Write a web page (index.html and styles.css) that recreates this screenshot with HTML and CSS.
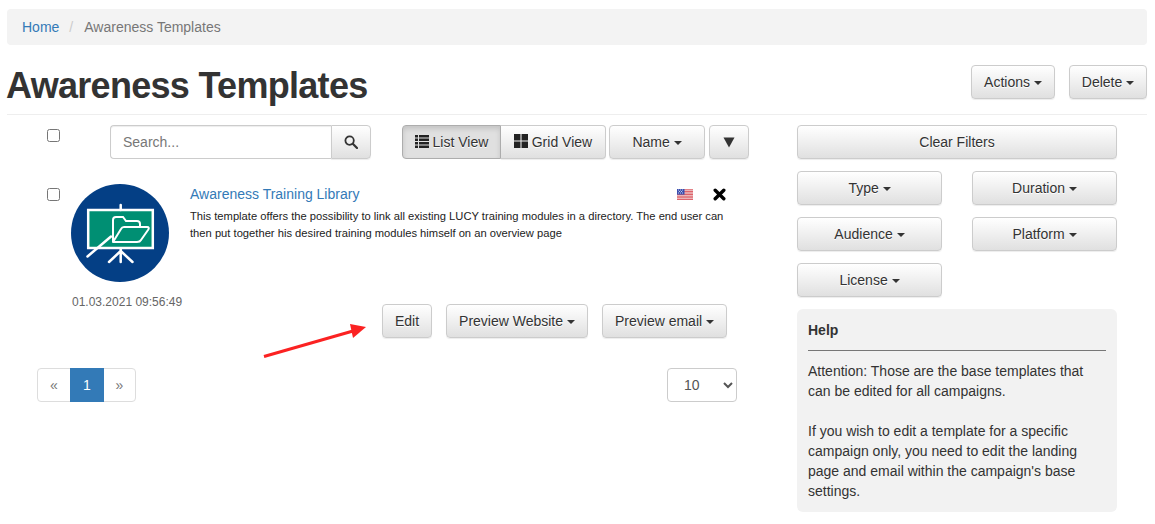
FILE: index.html
```html
<!DOCTYPE html>
<html lang="en">
<head>
<meta charset="utf-8">
<title>Awareness Templates</title>
<link rel="stylesheet" href="styles.css">
</head>
<body>
<div class="page">
  <nav class="breadcrumb"><a href="#">Home</a><span class="sep">/</span><span class="current">Awareness Templates</span></nav>
  <header class="page-header">
    <h1>Awareness Templates</h1>
    <div class="header-actions">
      <button class="btn btn-actions">Actions <i class="caret"></i></button>
      <button class="btn btn-delete">Delete <i class="caret"></i></button>
    </div>
  </header>
  <div class="content">
    <main class="main">
      <div class="toolbar">
        <input type="checkbox" class="check select-all">
        <div class="search">
          <input type="text" class="search-input" placeholder="Search...">
          <button class="btn search-btn" aria-label="Search">
            <svg width="14" height="14" viewBox="0 0 14 14"><circle cx="5.6" cy="5.6" r="4.2" fill="none" stroke="#333" stroke-width="1.8"/><path d="M8.8 8.8 L13 13" stroke="#333" stroke-width="2.2" stroke-linecap="round"/></svg>
          </button>
        </div>
        <div class="view-group">
          <button class="btn view-list">
            <svg width="14" height="13" viewBox="0 0 14 13" fill="#222"><path d="M0 0h3v2.4H0zM4 0h10v2.4H4zM0 3.5h3v2.4H0zM4 3.5h10v2.4H4zM0 7h3v2.4H0zM4 7h10v2.4H4zM0 10.500h3v2.400H0zM4 10.500h10v2.400H4z"/></svg>
            List View</button>
          <button class="btn view-grid">
            <svg width="14" height="14" viewBox="0 0 13 13" fill="#222"><path d="M0 0h6v6H0zM7 0h6v6H7zM0 7h6v6H0zM7 7h6v6H7z"/></svg>
            Grid View</button>
        </div>
        <button class="btn sort-name">Name <i class="caret"></i></button>
        <button class="btn sort-dir" aria-label="Sort direction"><svg width="12" height="11" viewBox="0 0 12 11"><path d="M0.500 0.500H11.500L6 10.500Z" fill="#333"/></svg></button>
      </div>

      <article class="item">
        <input type="checkbox" class="check item-check">
        <div class="item-side">
          <svg class="logo" width="98" height="98" viewBox="0 0 98 98">
            <circle cx="49" cy="49" r="49" fill="#043f85"/>
            <rect x="17.200" y="26" width="64.600" height="38" fill="#008f73" stroke="#fff" stroke-width="2.500"/>
            <path d="M49.700 21V26M49.700 65V78M49.700 67L38 78M49.700 67L61.500 78" stroke="#fff" stroke-width="2.500" stroke-linecap="round" fill="none"/>
            <path d="M16.500 72.500L40 52.500" stroke="#fff" stroke-width="2.500" stroke-linecap="round"/>
            <path d="M42 58V36Q42 33 45 33H52L55 37H66Q69 37 69 40V43" fill="none" stroke="#fff" stroke-width="2"/>
            <path d="M42 58L50 45Q51 43 53 43H76Q79 43 77 46L70 56Q69 58 66 58Z" fill="none" stroke="#fff" stroke-width="2" stroke-linejoin="round"/>
          </svg>
          <div class="date">01.03.2021 09:56:49</div>
        </div>
        <div class="item-body">
          <div class="item-top">
            <a href="#" class="item-title">Awareness Training Library</a>
            <svg class="flag" width="16" height="11" viewBox="0 0 16 11">
              <rect width="16" height="11" fill="#f4f4f4"/>
              <path d="M0 .8h16M0 2.400h16M0 4h16M0 5.600h16M0 7.200h16M0 8.800h16M0 10.400h16" stroke="#d8414a" stroke-width=".9"/>
              <rect width="7.500" height="5.600" fill="#3a4fb0"/>
              <path d="M1 1h1M3 1h1M5 1h1M2 2.500h1M4 2.500h1M1 4h1M3 4h1M5 4h1" stroke="#fff" stroke-width=".7"/>
            </svg>
            <svg class="close-x" width="13" height="13" viewBox="0 0 13 13"><path d="M2.200 2.200L10.800 10.800M10.800 2.200L2.200 10.800" stroke="#000" stroke-width="3.400" stroke-linecap="round"/></svg>
          </div>
          <p class="item-desc">This template offers the possibility to link all existing LUCY training modules in a directory. The end user can then put together his desired training modules himself on an overview page</p>
        </div>
      </article>

      <div class="item-actions">
        <button class="btn btn-edit">Edit</button>
        <button class="btn btn-web">Preview Website <i class="caret"></i></button>
        <button class="btn btn-mail">Preview email <i class="caret"></i></button>
      </div>

      <div class="list-footer">
        <ul class="pagination">
          <li class="prev">«</li><li class="active">1</li><li class="next">»</li>
        </ul>
        <select class="page-size"><option>10</option></select>
      </div>
    </main>

    <aside class="sidebar">
      <button class="btn btn-clear">Clear Filters</button>
      <div class="filters">
        <button class="btn">Type <i class="caret"></i></button>
        <button class="btn">Duration <i class="caret"></i></button>
        <button class="btn">Audience <i class="caret"></i></button>
        <button class="btn">Platform <i class="caret"></i></button>
        <button class="btn">License <i class="caret"></i></button>
      </div>
      <section class="help">
        <h4>Help</h4>
        <p>Attention: Those are the base templates that can be edited for all campaigns.</p>
        <p>If you wish to edit a template for a specific campaign only, you need to edit the landing page and email within the campaign's base settings.</p>
      </section>
    </aside>
  </div>
  <svg class="arrow" width="110" height="40" viewBox="0 0 110 40">
    <path d="M1 36.500L90 11" stroke="#fb2222" stroke-width="3" fill="none"/>
    <path d="M103 7L87 4L90 18Z" fill="#fb2222"/>
  </svg>
</div>
</body>
</html>
```
FILE: styles.css
```css
* { box-sizing: border-box; }
html, body { margin: 0; padding: 0; background: #fff; }
body { font-family: "Liberation Sans", Arial, sans-serif; font-size: 14px; line-height: 20px; color: #333; height: 524px; overflow: hidden; }
a { color: #337ab7; text-decoration: none; }
.page { position: relative; padding: 9px 8px 0 7px; }

.btn {
  display: inline-block; height: 34px; padding: 6px 12px; font: inherit; color: #333; white-space: nowrap;
  border: 1px solid #ccc; border-radius: 4px; cursor: pointer;
  background: linear-gradient(to bottom, #fff 0, #e0e0e0 100%);
  box-shadow: inset 0 1px 0 rgba(255,255,255,.15), 0 1px 1px rgba(0,0,0,.075);
  text-shadow: 0 1px 0 #fff;
}
.caret { display: inline-block; width: 0; height: 0; margin-left: 0; vertical-align: middle; border-top: 4px solid #333; border-left: 4px solid transparent; border-right: 4px solid transparent; }

.breadcrumb { height: 36px; padding: 8px 15px; background: #f3f3f3; border-radius: 4px; }
.sep { padding: 0 11px 0 10px; color: #ccc; }
.current { color: #777; }

.page-header { display: flex; justify-content: space-between; align-items: flex-start; height: 70px; border-bottom: 1px solid #eee; }
h1 { margin: 21px 0 0 -1px; font-size: 36px; line-height: 40px; font-weight: 700; letter-spacing: -0.7px; color: #333; }
.header-actions { display: flex; gap: 14px; margin-top: 20px; }
.btn-actions { width: 84px; padding: 6px 0; }
.btn-delete { width: 78px; padding: 6px 0; }

.content { display: flex; }
.main { position: relative; width: 790px; padding-top: 10px; }
.sidebar { width: 320px; padding-top: 10px; }

.check { width: 13px; height: 13px; margin: 0; }
.toolbar { display: flex; align-items: flex-start; height: 34px; }
.select-all { margin: 4px 0 0 40px; }
.search { display: flex; width: 261px; margin-left: 50px; }
.search-input { flex: 1; min-width: 0; height: 34px; padding: 6px 12px; font: inherit; color: #555; border: 1px solid #ccc; border-right: 0; border-radius: 4px 0 0 4px; box-shadow: inset 0 1px 1px rgba(0,0,0,.075); }
.search-input::placeholder { color: #777; }
.search-btn { width: 40px; padding: 0; border-radius: 0 4px 4px 0; }
.search-btn svg { display: block; margin: 0 auto; }
.view-group { display: flex; margin-left: 31px; }
.view-group svg { vertical-align: -1px; }
.view-list { width: 99px; padding: 6px 0; border-radius: 4px 0 0 4px; border-color: #adadad; background: #e0e0e0; box-shadow: inset 0 3px 5px rgba(0,0,0,.125); }
.view-grid { width: 105px; padding: 6px 0; margin-left: 0; border-left: 0; border-radius: 0 4px 4px 0; }
.sort-name { width: 96px; padding: 6px 0; margin-left: 3px; }
.sort-dir { width: 40px; padding: 0; margin-left: 4px; }
.sort-dir svg { display: block; margin: 1px auto 0; }

.item { display: flex; align-items: flex-start; height: 120px; margin-top: 25px; }
.item-check { margin: 4px 0 0 40px; }
.item-side { width: 111px; margin-left: 11px; flex: none; }
.logo { display: block; }
.date { width: 98px; margin-top: 9px; padding: 1px 0 0 1px; font-size: 12px; line-height: 20px; color: #666; white-space: nowrap; }
.item-body { width: 537px; margin-left: 8px; }
.item-top { display: flex; align-items: center; height: 20px; padding-right: 1px; }
.item-title { flex: 1; }
.flag { margin: 1px 20px 0 0; }
.close-x { margin: 0; }
.item-desc { margin: 4px 0 0; font-size: 11.2px; line-height: 17px; color: #222; }

.item-actions { display: flex; gap: 14px; margin: 0 0 0 375px; }
.btn-edit { width: 50px; padding: 6px 0; }
.btn-web { width: 142px; padding: 6px 0; }
.btn-mail { width: 125px; padding: 6px 0; }

.list-footer { display: flex; justify-content: space-between; width: 700px; margin: 30px 0 0 30px; }
.pagination { display: flex; margin: 0; padding: 0; list-style: none; }
.pagination li { width: 34px; height: 34px; margin-left: -1px; text-align: center; line-height: 32px; color: #777; border: 1px solid #ddd; background: #fff; }
.pagination .prev { margin-left: 0; border-radius: 4px 0 0 4px; }
.pagination .next { width: 33px; border-radius: 0 4px 4px 0; }
.pagination .active { position: relative; color: #fff; background: #337ab7; border-color: #337ab7; }
.page-size { width: 70px; height: 34px; padding: 6px 12px; font: inherit; color: #555; background: #fff; border: 1px solid #ccc; border-radius: 4px; }

.btn-clear { display: block; width: 320px; }
.filters { display: grid; grid-template-columns: 145px 145px; column-gap: 30px; row-gap: 12px; margin-top: 12px; }
.filters .btn { width: 145px; }
.help { height: 203px; margin-top: 12px; padding: 11px 11px 0; background: #f2f2f2; border-radius: 6px; line-height: 20px; }
.help h4 { margin: 0; padding-bottom: 10px; font-size: 14px; line-height: 20px; font-weight: 700; border-bottom: 1px solid #777; }
.help p { margin: 10px 0 20px; }

.arrow { position: absolute; left: 263px; top: 320px; }
```
